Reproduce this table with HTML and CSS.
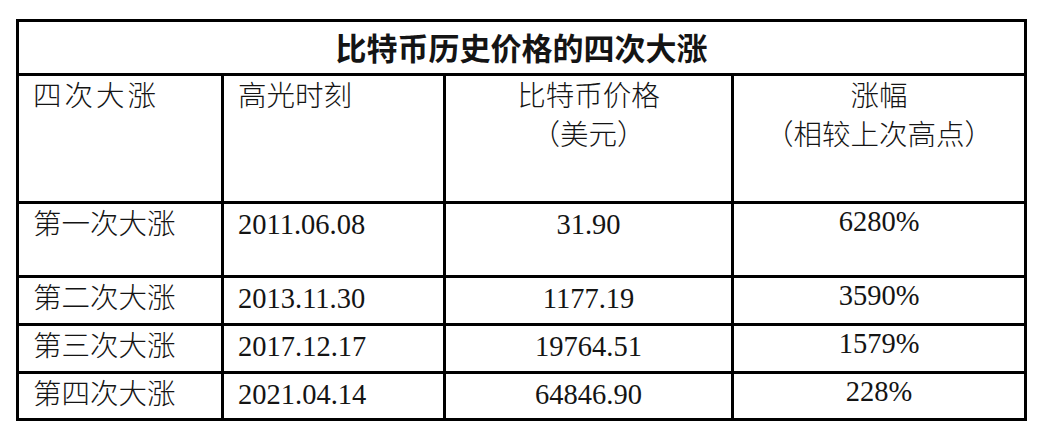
FILE: index.html
```html
<!DOCTYPE html>
<html lang="zh-CN">
<head>
<meta charset="utf-8">
<title>比特币历史价格的四次大涨</title>
<link rel="stylesheet" href="styles.css">
</head>
<body>
<div class="page">
  <table class="rally">
    <colgroup>
      <col class="c1"><col class="c2"><col class="c3"><col class="c4">
    </colgroup>
    <tr class="r-title"><th colspan="4" class="title">比特币历史价格的四次大涨</th></tr>
    <tr class="r-head">
      <td class="left wide">四次大涨</td>
      <td class="left">高光时刻</td>
      <td class="center">比特币价格<br>（美元）</td>
      <td class="center">涨幅<br>（相较上次高点）</td>
    </tr>
    <tr class="r1">
      <td class="left">第一次大涨</td>
      <td class="left">2011.06.08</td>
      <td class="center">31.90</td>
      <td class="center pct">6280%</td>
    </tr>
    <tr class="r2">
      <td class="left">第二次大涨</td>
      <td class="left">2013.11.30</td>
      <td class="center">1177.19</td>
      <td class="center pct">3590%</td>
    </tr>
    <tr class="r3">
      <td class="left">第三次大涨</td>
      <td class="left">2017.12.17</td>
      <td class="center">19764.51</td>
      <td class="center pct">1579%</td>
    </tr>
    <tr class="r4">
      <td class="left">第四次大涨</td>
      <td class="left">2021.04.14</td>
      <td class="center">64846.90</td>
      <td class="center pct">228%</td>
    </tr>
  </table>
</div>
</body>
</html>
```

FILE: styles.css
```css
html, body {
  margin: 0;
  padding: 0;
  background: #fff;
}
.page {
  padding: 19px 0 0 16px;
}
.rally {
  border-collapse: collapse;
  table-layout: fixed;
  width: 1008px;
  color: #141414;
  font-family: "Liberation Serif", "Noto Sans CJK SC", serif;
  font-size: 28.5px;
}
.c1 { width: 205px; }
.c2 { width: 222px; }
.c3 { width: 288px; }
.c4 { width: 293px; }
.rally th, .rally td {
  border: 3px solid #000;
  padding: 0;
}
.rally td {
  vertical-align: top;
  line-height: 39px;
  padding-top: 1px;
  font-weight: 300;
}
.rally .title {
  font-family: "Noto Sans CJK SC", sans-serif;
  font-weight: 700;
  font-size: 31px;
  text-align: center;
  vertical-align: middle;
  line-height: 40px;
  padding: 0 0 1px 0;
}
.r-title { height: 54px; }
.r-head { height: 128px; }
.r1 { height: 74px; }
.r2 { height: 48px; }
.r3 { height: 48px; }
.r4 { height: 47px; }
.left { text-align: left; padding-left: 14px !important; }
.center { text-align: center; }
.wide { letter-spacing: 3px; }
.pct { position: relative; top: -3px; }
```
